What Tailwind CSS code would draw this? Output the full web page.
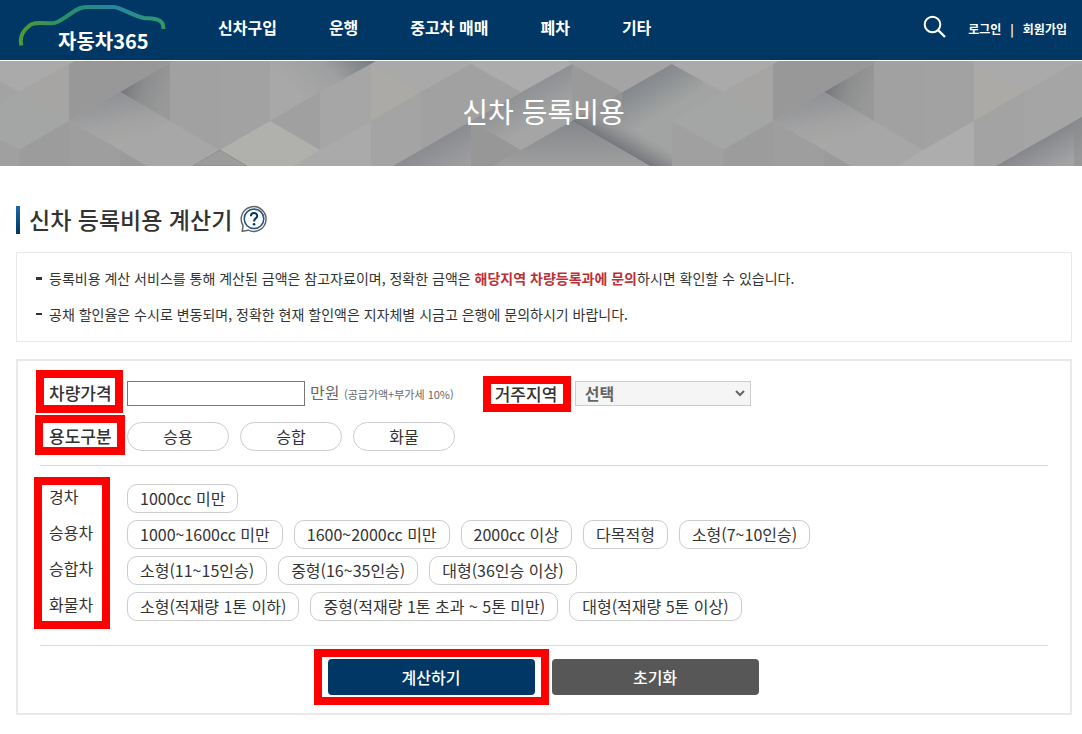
<!DOCTYPE html>
<html lang="ko">
<head>
    <meta charset="UTF-8">
    <meta name="viewport" content="width=device-width, initial-scale=1.0">
    <title>신차 등록비용 - 자동차365</title>
    <script src="https://cdn.jsdelivr.net/npm/@tailwindcss/browser@4"></script>
</head>
<body class="min-h-screen bg-white font-['Noto_Sans_CJK_KR',sans-serif] text-base text-[#333]">
    <!-- 상단 메뉴 -->
    <header class="flex h-[60px] items-start bg-[#003764] pr-[15px] text-white">
        <a href="#" class="relative ml-[16px] block h-[60px] w-[154px] shrink-0">
            <svg class="h-[60px] w-[154px]" viewBox="0 0 154 60" fill="none" aria-hidden="true">
                <defs>
                    <linearGradient id="logo" x1="0" y1="0" x2="1" y2="0">
                        <stop offset="0" stop-color="#4f9a35"/>
                        <stop offset=".3" stop-color="#2a8f66"/>
                        <stop offset=".65" stop-color="#2685a3"/>
                        <stop offset="1" stop-color="#2f9a68"/>
                    </linearGradient>
                </defs>
                <path d="M5.5 45.5C3 37 8 30 13 26C18 21 26 24 38 23C44 22 49 17 57 12C63 8 66 7 73 7H97C105 7 117 16 128 18C138 19 147.5 18 147.5 29" stroke="url(#logo)" stroke-width="4"/>
            </svg>
            <span class="absolute top-[27px] left-[42px] text-xl leading-[28px] font-bold whitespace-nowrap">자동차365</span>
        </a>
        <nav class="ml-[48px] flex gap-[52px] font-bold leading-[54px] whitespace-nowrap">
            <a href="#">신차구입</a>
            <a href="#">운행</a>
            <a href="#">중고차 매매</a>
            <a href="#">폐차</a>
            <a href="#">기타</a>
        </nav>
        <div class="ml-auto flex items-center text-xs leading-[58px] font-bold whitespace-nowrap">
            <button type="button" aria-label="검색" class="mr-[21px] mb-[5px]">
                <svg class="h-[24px] w-[24px]" viewBox="0 0 24 24" fill="none" stroke="#fff" stroke-width="2">
                    <circle cx="9.5" cy="9.5" r="7.8"/>
                    <path d="M15 15L22 22" stroke-width="2.4"/>
                </svg>
            </button>
            <a href="#">로그인</a>
            <span class="mx-[9px]">|</span>
            <a href="#">회원가입</a>
        </div>
    </header>

    <!-- 배너 -->
    <section class="relative mt-px h-[105px] overflow-hidden bg-[#a4a4a4]">
        <svg class="absolute inset-0 h-full w-full" viewBox="0 0 1082 105" preserveAspectRatio="xMinYMid slice" aria-hidden="true">
            <defs>
                <linearGradient id="down" x1=".2" y1="0" x2=".5" y2="1">
                    <stop offset="0" stop-color="#8c8e93"/>
                    <stop offset=".6" stop-color="#a3a3a3"/>
                    <stop offset="1" stop-color="#a9a9a8"/>
                </linearGradient>
                <linearGradient id="wedge" x1="0" y1=".3" x2=".9" y2=".7">
                    <stop offset="0" stop-color="#6f7378"/>
                    <stop offset=".5" stop-color="#8d8e8f"/>
                    <stop offset="1" stop-color="#999"/>
                </linearGradient>
                <linearGradient id="corner" x1="0" y1=".6" x2="1" y2="0">
                    <stop offset=".2" stop-color="#a8a8a8"/>
                    <stop offset=".6" stop-color="#9fa0a1"/>
                    <stop offset="1" stop-color="#75797e"/>
                </linearGradient>
                <linearGradient id="shade" gradientUnits="userSpaceOnUse" x1="450" y1="70" x2="470" y2="105">
                    <stop offset="0" stop-color="#898b90"/>
                    <stop offset="1" stop-color="#a0a0a1"/>
                </linearGradient>
                <linearGradient id="ridge" gradientUnits="userSpaceOnUse" x1="505" y1="40" x2="522" y2="72">
                    <stop offset="0" stop-color="#8f9195"/>
                    <stop offset="1" stop-color="#a5a5a5"/>
                </linearGradient>
                <linearGradient id="ridge2" gradientUnits="userSpaceOnUse" x1="620" y1="32" x2="640" y2="66">
                    <stop offset="0" stop-color="#84878c"/>
                    <stop offset="1" stop-color="#a2a4a3"/>
                </linearGradient>
                <linearGradient id="slope" gradientUnits="userSpaceOnUse" x1="620" y1="88" x2="634" y2="64">
                    <stop offset="0" stop-color="#74777c"/>
                    <stop offset=".5" stop-color="#929394"/>
                    <stop offset="1" stop-color="#a2a3a3" stop-opacity="0"/>
                </linearGradient>
                <linearGradient id="under" gradientUnits="userSpaceOnUse" x1="572" y1="60" x2="572" y2="105">
                    <stop offset="0" stop-color="#85878b"/>
                    <stop offset="1" stop-color="#9f9f9f"/>
                </linearGradient>
                <linearGradient id="right" gradientUnits="userSpaceOnUse" x1="1045" y1="77" x2="1062" y2="106">
                    <stop offset="0" stop-color="#86888d"/>
                    <stop offset="1" stop-color="#a3a4a5"/>
                </linearGradient>
                <g id="facets">
                    <path fill="#aaa" d="M-1 0H75L69 3L19 31L-1 20Z"/>
                    <path fill="#a3a3a3" d="M-1 20L19 31L-1 43Z"/>
                    <path fill="#a3a6a5" d="M-1 43L19 31L69 60L19 89L-1 78Z"/>
                    <path fill="#a6a5a3" d="M19 31L69 3V60Z"/>
                    <path fill="#a0a0a0" d="M-1 78L19 89V105H-1Z"/>
                    <path fill="#9c9c9c" d="M19 89L69 60V105H19Z"/>
                    <path fill="#989898" d="M69 3L75 0H174L69 60Z"/>
                    <path fill="url(#wedge)" d="M120 31L170 2V60Z"/>
                    <path fill="url(#down)" d="M69 60L120 31L170 60L120 89Z"/>
                    <path fill="#9e9e9e" d="M69 60L120 89V105H69Z"/>
                    <path fill="#9b9b9b" d="M120 89L147 105H120Z"/>
                    <path fill="#a7a7a7" d="M120 89L170 60L220 89L193 105H147Z"/>
                    <path fill="#a1a1a1" d="M170 2L174 0H220V89L170 60Z"/>
                    <path fill="#a2a2a2" d="M220 0H270V60L220 89Z"/>
                </g>
            </defs>
            <use href="#facets"/>
            <path fill="url(#corner)" d="M270 0H376L371 3L270 60Z"/>
            <path fill="#a0a0a0" d="M270 60L320 31V89Z"/>
            <path fill="#a6a6a6" d="M320 31L371 3V60L320 89Z"/>
            <path fill="#b0b0ad" d="M220 89L270 60L320 89L293 105H247Z"/>
            <path fill="#9c9c9c" stroke="#858585" stroke-width=".6" d="M193 105L220 89L247 105Z"/>
            <path fill="#aaa" d="M320 89L371 60V105H293Z"/>
            <path fill="#a9a9a9" d="M376 0H465L471 3L421 31L371 3Z"/>
            <path fill="#acaaa7" d="M371 3L421 31L371 60Z"/>
            <path fill="#a4a4a4" d="M371 60L421 31V89L393 105H371Z"/>
            <path fill="#a1a1a1" d="M421 31L471 3L521 31L421 89Z"/>
            <path fill="#acacac" d="M465 0H572V3L521 31L471 3Z"/>
            <path fill="url(#shade)" d="M393 105L471 60V105Z"/>
            <path fill="#979797" d="M471 60L521 89L493 105H471Z"/>
            <path fill="url(#ridge)" d="M471 60L572 3V60L521 89Z"/>
            <path fill="#9a9a9a" d="M572 3L622 31L572 60Z"/>
            <path fill="#a4a4a4" d="M567 0H678L672 3L622 31L572 3Z"/>
            <path fill="url(#ridge2)" d="M572 60L672 3L722 31L672 60V105H650Z"/>
            <path fill="#9b9c9c" fill-opacity=".5" d="M572 60L622 31V89Z"/>
            <path fill="url(#slope)" d="M572 60L600 44L690 105H650Z"/>
            <path fill="url(#under)" d="M493 105L572 60L650 105Z"/>
            <path fill="#aaa" d="M678 0H723V31L672 3Z"/>
            <path fill="#a3a6a5" d="M672 60L723 31V89Z"/>
            <path fill="#a0a0a0" d="M672 60L723 89V105H672Z"/>
            <use href="#facets" x="704"/>
            <path fill="#aaa" d="M974 0H1082V3L1074 3L1024 31L974 3Z"/>
            <path fill="#acaaa7" d="M974 3L1024 31L974 60Z"/>
            <path fill="#adadad" d="M923 89L974 60V105H897Z"/>
            <path fill="#a5a5a5" d="M974 60L1074 3L1082 8V56L996 105H974Z"/>
            <path fill="#a3a3a3" d="M1024 31V89L996 105H974V60Z"/>
            <path fill="url(#right)" d="M996 105L1082 56V105Z"/>
            <path fill="#8b8b8c" fill-opacity=".5" d="M1074 61L1082 56V105H1074Z"/>
        </svg>
        <h1 class="relative pl-[5px] text-center text-[28px] leading-[100px] font-normal text-white">신차 등록비용</h1>
    </section>

    <main class="pt-[38px] pr-[10px] pb-5 pl-4">
        <div class="flex h-[32px] items-center">
            <span class="h-[28px] w-1 bg-linear-to-b from-[#1a68aa] to-[#003764]"></span>
            <h2 class="mb-[2px] ml-[9px] text-[23px] leading-[28px] font-medium">신차 등록비용 계산기</h2>
            <button type="button" aria-label="도움말" class="mb-[2px] ml-[8px]">
                <svg class="h-[28px] w-[28px]" viewBox="0 0 28 28" fill="none">
                    <path d="M2.2 26.3L3.1 20.6A12.4 12.4 0 1 1 8.2 25.2Z" stroke="#666" stroke-width="1.5" stroke-linejoin="round"/>
                    <circle cx="14" cy="13.8" r="9.8" stroke="#1c5484" stroke-width="1.5"/>
                    <path d="M10.9 11.2C10.9 7 17.2 7 17.2 10.9C17.2 13.4 14.1 13.4 14.1 16.4" stroke="#003764" stroke-width="2"/>
                    <circle cx="14.1" cy="19.2" r="1.3" fill="#003764"/>
                </svg>
            </button>
        </div>

        <!-- 안내 문구 -->
        <ul class="mt-[16px] border border-[#e9e9e9] px-[19px] pt-[7px] pb-[9px] text-sm leading-[36px]">
            <li class="flex items-center">
                <span class="mr-[7px] h-[3px] w-[6px] shrink-0 bg-[#333]"></span>
                <p>등록비용 계산 서비스를 통해 계산된 금액은 참고자료이며, 정확한 금액은 <strong class="font-bold text-[#bd3036]">해당지역 차량등록과에 문의</strong>하시면 확인할 수 있습니다.</p>
            </li>
            <li class="flex items-center">
                <span class="mr-[7px] h-[2px] w-[6px] shrink-0 bg-[#333]"></span>
                <p>공채 할인율은 수시로 변동되며, 정확한 현재 할인액은 지자체별 시금고 은행에 문의하시기 바랍니다.</p>
            </li>
        </ul>

        <!-- 계산기 -->
        <form class="mt-[17px] border-2 border-[#e9e9e9] px-[22px] pt-[20px] pb-[18px]">
            <div class="flex h-[25px] items-center whitespace-nowrap">
                <div class="relative w-[87px] shrink-0 pb-[2px] pl-[9px]">
                    <label for="price" class="block text-[17px] leading-[23px] font-medium">차량가격</label>
                    <span class="pointer-events-none absolute -top-[11px] -left-[4px] h-[43px] w-[87px] border-8 border-[#f00]"></span>
                </div>
                <input id="price" type="text" class="h-[25px] w-[178px] border border-[#767676] bg-white px-2">
                <span class="ml-[5px] leading-[25px] text-[#666]">만원 <small class="text-[11px]">(공급가액+부가세 10%)</small></span>
                <div class="relative ml-[41px] w-[80px] shrink-0">
                    <label for="region" class="block text-[17px] leading-[25px] font-medium">거주지역</label>
                    <span class="pointer-events-none absolute -top-[5px] -left-[12px] h-[36px] w-[88px] border-8 border-[#f00]"></span>
                </div>
                <div class="relative">
                    <select id="region" class="block h-[25px] w-[176px] appearance-none border border-[#ccc] bg-[#f5f5f5] px-[9px] leading-[23px] font-bold text-[#666]">
                        <option>선택</option>
                    </select>
                    <svg class="pointer-events-none absolute top-[9px] right-[6px] h-[7px] w-[10px]" viewBox="0 0 10 7" fill="none" stroke="#666" stroke-width="2" aria-hidden="true">
                        <path d="M1 1L5 5L9 1"/>
                    </svg>
                </div>
            </div>

            <div class="mt-[16px] flex items-center" role="group" aria-labelledby="usage">
                <div class="relative w-[87px] shrink-0 pb-[2px] pl-[9px]">
                    <span id="usage" class="block text-[17px] leading-[27px] font-medium">용도구분</span>
                    <span class="pointer-events-none absolute -top-[7px] -left-[5px] h-[40px] w-[90px] border-8 border-[#f00]"></span>
                </div>
                <div class="flex gap-[11px]">
                    <button type="button" class="h-[29px] w-[102px] rounded-full border border-[#ccc] leading-[27px]">승용</button>
                    <button type="button" class="h-[29px] w-[102px] rounded-full border border-[#ccc] leading-[27px]">승합</button>
                    <button type="button" class="h-[29px] w-[102px] rounded-full border border-[#ccc] leading-[27px]">화물</button>
                </div>
            </div>

            <div class="relative mt-[14px] border-y border-[#d9d9d9] pt-[18px] pb-[24px]">
                <span class="pointer-events-none absolute top-[11px] -left-[6px] h-[152px] w-[76px] border-8 border-[#f00]"></span>
                <div class="grid gap-y-[7px]">
                    <div class="flex gap-[11px]">
                        <span class="-mr-[11px] w-[87px] shrink-0 pl-[9px] leading-[24px]">경차</span>
                        <button type="button" class="h-[29px] rounded-[10px] border border-[#ccc] px-[12px] leading-[27px]">1000cc 미만</button>
                    </div>
                    <div class="flex gap-[11px]">
                        <span class="-mr-[11px] w-[87px] shrink-0 pl-[9px] leading-[24px]">승용차</span>
                        <button type="button" class="h-[29px] rounded-[10px] border border-[#ccc] px-[12px] leading-[27px]">1000~1600cc 미만</button>
                        <button type="button" class="h-[29px] rounded-[10px] border border-[#ccc] px-[12px] leading-[27px]">1600~2000cc 미만</button>
                        <button type="button" class="h-[29px] rounded-[10px] border border-[#ccc] px-[12px] leading-[27px]">2000cc 이상</button>
                        <button type="button" class="h-[29px] rounded-[10px] border border-[#ccc] px-[12px] leading-[27px]">다목적형</button>
                        <button type="button" class="h-[29px] rounded-[10px] border border-[#ccc] px-[12px] leading-[27px]">소형(7~10인승)</button>
                    </div>
                    <div class="flex gap-[11px]">
                        <span class="-mr-[11px] w-[87px] shrink-0 pl-[9px] leading-[24px]">승합차</span>
                        <button type="button" class="h-[29px] rounded-[10px] border border-[#ccc] px-[12px] leading-[27px]">소형(11~15인승)</button>
                        <button type="button" class="h-[29px] rounded-[10px] border border-[#ccc] px-[12px] leading-[27px]">중형(16~35인승)</button>
                        <button type="button" class="h-[29px] rounded-[10px] border border-[#ccc] px-[12px] leading-[27px]">대형(36인승 이상)</button>
                    </div>
                    <div class="flex gap-[11px]">
                        <span class="-mr-[11px] w-[87px] shrink-0 pl-[9px] leading-[24px]">화물차</span>
                        <button type="button" class="h-[29px] rounded-[10px] border border-[#ccc] px-[12px] leading-[27px]">소형(적재량 1톤 이하)</button>
                        <button type="button" class="h-[29px] rounded-[10px] border border-[#ccc] px-[12px] leading-[27px]">중형(적재량 1톤 초과 ~ 5톤 미만)</button>
                        <button type="button" class="h-[29px] rounded-[10px] border border-[#ccc] px-[12px] leading-[27px]">대형(적재량 5톤 이상)</button>
                    </div>
                </div>
            </div>

            <div class="mt-[13px] flex justify-center gap-[17px] pr-[2px] font-medium text-white">
                <div class="relative">
                    <button type="submit" class="block h-[36px] w-[207px] rounded bg-[#003764] leading-[36px]">계산하기</button>
                    <span class="pointer-events-none absolute -top-[10px] -left-[14px] h-[56px] w-[235px] border-8 border-[#f00]"></span>
                </div>
                <button type="reset" class="h-[36px] w-[207px] rounded bg-[#575757] leading-[36px]">초기화</button>
            </div>
        </form>
    </main>
</body>
</html>
